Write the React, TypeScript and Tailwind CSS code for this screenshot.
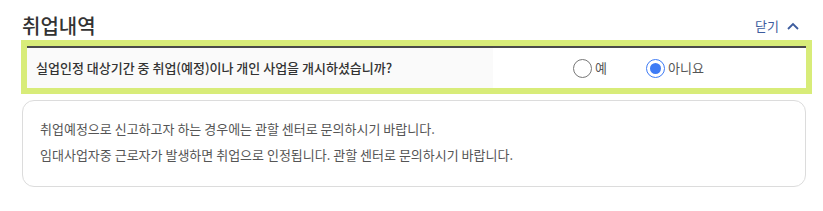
import { useState } from 'react';

const font = { fontFamily: '"Noto Sans CJK KR", "Noto Sans", sans-serif' };

function Radio({ checked, label, onClick }: { checked: boolean; label: string; onClick: () => void }) {
  return (
    <button type="button" onClick={onClick} className="flex items-center gap-[3px]">
      {checked ? (
        <span className="flex h-[19px] w-[19px] items-center justify-center rounded-full border-[1.5px] border-[#3e7bf5] bg-white">
          <span className="h-[11px] w-[11px] rounded-full bg-[#3e7bf5]" />
        </span>
      ) : (
        <span className="h-[19px] w-[19px] rounded-full border border-[#777] bg-white" />
      )}
      <span className="text-[13px] text-[#555]">{label}</span>
    </button>
  );
}

export default function App() {
  const [started, setStarted] = useState(false);
  const [open, setOpen] = useState(true);

  return (
    <div className="h-[211px] w-[823px] bg-white" style={font}>
      <div className="flex h-[40px] items-start justify-between pl-[22px] pr-[24px]">
        <h2 className="mt-[14px] text-[20px] leading-[24px] font-medium text-[#333]">취업내역</h2>
        <button
          type="button"
          onClick={() => setOpen(!open)}
          className="mt-[17px] flex items-center gap-[8px] text-[13px] leading-[18px] text-[#3d5c9e]"
        >
          닫기
          <svg width="12" height="8" viewBox="0 0 12 8" fill="none">
            <path d="M1 7l5-5 5 5" stroke="#3d5c9e" strokeWidth="1.8" />
          </svg>
        </button>
      </div>

      <div className="ml-[21px] w-[791px] border-[6px] border-[#d8ec79]">
        <div className="flex h-[42px] border-t-2 border-[#4a4a4a] bg-white">
          <div className="flex w-[466px] items-center bg-[#fafafa] pl-[9px] text-[13px] font-medium text-[#333]">
            실업인정 대상기간 중 취업(예정)이나 개인 사업을 개시하셨습니까?
          </div>
          <div className="flex items-center gap-[39px] pl-[80px]">
            <Radio checked={started} label="예" onClick={() => setStarted(true)} />
            <Radio checked={!started} label="아니요" onClick={() => setStarted(false)} />
          </div>
        </div>
      </div>

      {open && (
        <div className="ml-[22px] mt-[6px] h-[87px] w-[784px] rounded-[12px] border border-[#dcdcdc] pl-[17px] pt-[15px] text-[13px] leading-[26px] text-[#555]">
          <p>취업예정으로 신고하고자 하는 경우에는 관할 센터로 문의하시기 바랍니다.</p>
          <p>임대사업자중 근로자가 발생하면 취업으로 인정됩니다. 관할 센터로 문의하시기 바랍니다.</p>
        </div>
      )}
    </div>
  );
}
